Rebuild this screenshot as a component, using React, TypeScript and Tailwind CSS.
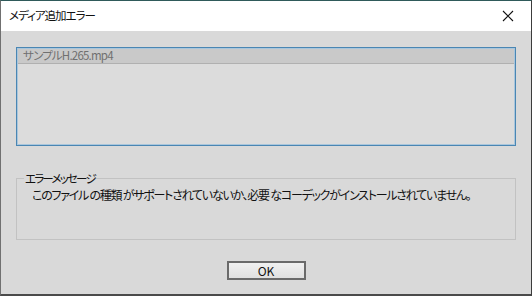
import React from "react";

const jp = {
  fontFamily: '"Noto Sans CJK JP", "Liberation Sans", sans-serif',
  fontFeatureSettings: '"palt"',
};

function CloseIcon() {
  return (
    <svg width="12" height="12" viewBox="0 0 12 12" className="text-[#111]">
      <path d="M1 1 L11 11 M11 1 L1 11" stroke="currentColor" strokeWidth="1.1" fill="none" />
    </svg>
  );
}

export default function App() {
  return (
    <div
      className="w-[532px] h-[296px] flex flex-col bg-[#d9d9d9] border-l border-r border-b-2 border-t border-l-[#707070] border-r-[#3c3c3c] border-b-[#4a4a4a] border-t-[#2f5a5a] overflow-hidden"
      style={jp}
    >
      <div className="h-[30px] bg-white flex items-center justify-between pl-2 pr-[17px] shrink-0">
        <span className="text-[11.5px] text-[#111] tracking-[-1px]">メディア追加エラー</span>
        <CloseIcon />
      </div>

      <div className="flex flex-col px-[15px] pt-[16px]">
        <div className="h-[99px] border border-[#4a86b3] shadow-[0_0_0_1px_#a9c6dc_inset] bg-[#dcdcdc] p-[1px]">
          <div className="h-[15px] bg-[#c9c9c9] border-b border-[#b0b0b0] flex items-center pl-[5px]">
            <span className="text-[11.5px] text-[#707070] tracking-[-0.8px] leading-none">サンプルH.265.mp4</span>
          </div>
        </div>

        <fieldset className="mt-[27px] h-[67px] border border-[#c2c2c2] px-[15px] pb-0 pt-0 m-0">
          <legend className="ml-[-8px] px-[1px] text-[11.5px] text-[#111] tracking-[-1.8px] leading-none">エラーメッセージ</legend>
          <p className="mt-[4px] text-[12px] text-[#111] tracking-[-1.25px] leading-none whitespace-nowrap">
            このファイル の種類 がサポートされていないか、必要 なコーデックがインストールされていません。
          </p>
        </fieldset>

        <div className="flex justify-center mt-[21px]">
          <button className="w-[79px] h-[19px] border-2 border-[#6a6a6a] bg-gradient-to-b from-[#f0f0f0] to-[#e0e0e0] text-[12px] text-[#111] leading-none flex items-center justify-center">
            OK
          </button>
        </div>
      </div>
    </div>
  );
}
